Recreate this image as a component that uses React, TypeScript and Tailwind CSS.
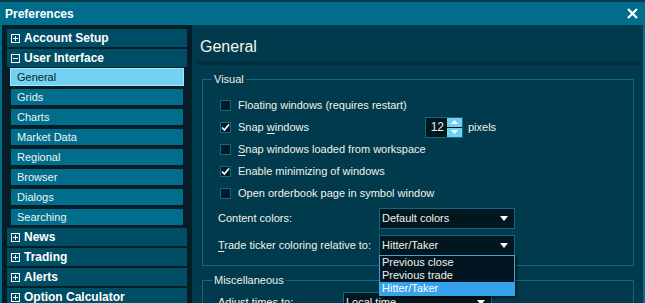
const font = "font-['Liberation_Sans',Arial,sans-serif]";

function TreeIcon({ open }: { open?: boolean }) {
  return (
    <svg width="9" height="9" viewBox="0 0 9 9" className="shrink-0">
      <rect x="0.5" y="0.5" width="8" height="8" fill="none" stroke="#ffffff" />
      <line x1="2" y1="4.5" x2="7" y2="4.5" stroke="#ffffff" />
      {!open && <line x1="4.5" y1="2" x2="4.5" y2="7" stroke="#ffffff" />}
    </svg>
  );
}

function Header({ label, open, className = "" }: { label: string; open?: boolean; className?: string }) {
  return (
    <div className={`h-[18px] bg-[#004e66] flex items-center pl-[4px] ${className}`}>
      <TreeIcon open={open} />
      <span className="ml-[4px] font-bold text-[12px] text-white leading-none">{label}</span>
    </div>
  );
}

function SubItem({ label, selected }: { label: string; selected?: boolean }) {
  return (
    <div
      className={`h-[18px] mx-[3px] mb-[2px] border flex items-center pl-[6px] leading-none ${
        selected
          ? "border-[#a6e8fb] bg-[#72d2f2] text-[#0b2430]"
          : "border-transparent bg-clip-padding bg-[#006d8c] text-[#eef4f0]"
      }`}
    >
      {label}
    </div>
  );
}

function Check({ checked, children }: { checked?: boolean; children: React.ReactNode }) {
  return (
    <div className="h-[22px] flex items-center pl-[17px]">
      <div className="w-[11px] h-[11px] border border-[#0b6a86] bg-[#001b26] flex items-center justify-center shrink-0">
        {checked && (
          <svg width="9" height="9" viewBox="0 0 9 9">
            <path d="M1 4.5 L3.4 7 L8 1.5" fill="none" stroke="#ffffff" strokeWidth="1.8" />
          </svg>
        )}
      </div>
      <span className="ml-[7px]">{children}</span>
    </div>
  );
}

function Arrow() {
  return (
    <svg width="8" height="5" viewBox="0 0 8 5">
      <path d="M0 0 H8 L4 5 Z" fill="#ffffff" />
    </svg>
  );
}

function Select({ value, width, children }: { value: string; width: string; children?: React.ReactNode }) {
  return (
    <div className={`relative h-[21px] ${width} border border-[#0b6a86] bg-[#001720] flex items-center pl-[2px] pr-[6px]`}>
      <span className="flex-1">{value}</span>
      <Arrow />
      {children}
    </div>
  );
}

export default function App() {
  const subItems = ["General", "Grids", "Charts", "Market Data", "Regional", "Browser", "Dialogs", "Searching"];

  return (
    <div className={`w-[645px] h-[303px] overflow-hidden bg-[#003a4c] text-[11px] text-[#f0f2e8] ${font}`}>
      <div className="h-[2px] bg-[#0b3a4a]" />
      <div className="h-[301px] flex flex-col border-x-2 border-[#006d8c]">
        {/* Title bar */}
        <div className="h-[23px] shrink-0 bg-[#006d8c] flex items-center justify-between pl-[3px] pr-[5px]">
          <span className="font-bold text-[12px] text-white">Preferences</span>
          <svg width="11" height="11" viewBox="0 0 11 11">
            <path d="M1 1 L10 10 M10 1 L1 10" stroke="#ffffff" strokeWidth="2.2" />
          </svg>
        </div>

        <div className="flex flex-1 min-h-0">
          {/* Tree */}
          <div className="w-[190px] shrink-0 bg-[#051d27] pt-[4px] px-[5px]">
            <Header label="Account Setup" />
            <Header label="User Interface" open className="mt-[2px] mb-[1px]" />
            {subItems.map((s) => (
              <SubItem key={s} label={s} selected={s === "General"} />
            ))}
            <Header label="News" className="mt-[2px]" />
            <Header label="Trading" className="mt-[2px]" />
            <Header label="Alerts" className="mt-[2px]" />
            <Header label="Option Calculator" className="mt-[2px]" />
          </div>

          {/* Content */}
          <div className="flex-1 bg-[#003a4c]">
            <div className="pt-[12px] pl-[8px] text-[16px] leading-[20px] text-[#f4f6ee]">General</div>
            <div className="mt-[4px] ml-[3px] mr-[2px] h-[4px] bg-[#00303e]" />

            <div className="relative mt-[14px] ml-[10px] mr-[9px] border border-[#0b6a86] pt-[14px] pb-[9px]">
              <span className="absolute left-[9px] top-[-7px] px-[2px] leading-[13px] bg-[#003a4c]">Visual</span>
              <Check>Floating windows (requires restart)</Check>
              <div className="h-[22px] flex items-center pl-[17px]">
                <div className="w-[11px] h-[11px] border border-[#0b6a86] bg-[#001b26] flex items-center justify-center shrink-0">
                  <svg width="9" height="9" viewBox="0 0 9 9">
                    <path d="M1 4.5 L3.4 7 L8 1.5" fill="none" stroke="#ffffff" strokeWidth="1.8" />
                  </svg>
                </div>
                <span className="ml-[7px] w-[187px]">
                  Snap <u className="underline-offset-2">w</u>indows
                </span>
                <div className="h-[21px] w-[38px] flex border border-[#0b6a86] bg-[#001720]">
                  <span className="flex-1 text-right pr-[3px] leading-[19px] text-[12px]">12</span>
                  <div className="w-[15px] flex flex-col gap-[1px]">
                    <div className="flex-1 bg-[#6fd0f0] flex items-center justify-center">
                      <svg width="7" height="4" viewBox="0 0 7 4">
                        <path d="M0 4 H7 L3.5 0 Z" fill="#ffffff" />
                      </svg>
                    </div>
                    <div className="flex-1 bg-[#6fd0f0] flex items-center justify-center">
                      <svg width="7" height="4" viewBox="0 0 7 4">
                        <path d="M0 0 H7 L3.5 4 Z" fill="#ffffff" />
                      </svg>
                    </div>
                  </div>
                </div>
                <span className="ml-[5px]">pixels</span>
              </div>
              <Check>
                <u className="underline-offset-2">S</u>nap windows loaded from workspace
              </Check>
              <Check checked>Enable minimizing of windows</Check>
              <Check>Open orderbook page in symbol window</Check>

              <div className="mt-[4px] flex items-center pl-[15px]">
                <span className="w-[161px]">Content colors:</span>
                <Select value="Default colors" width="w-[136px]" />
              </div>
              <div className="mt-[6px] flex items-center pl-[15px]">
                <span className="w-[161px]">
                  <u className="underline-offset-2">T</u>rade ticker coloring relative to:
                </span>
                <Select value="Hitter/Taker" width="w-[136px]">
                  <div className="absolute z-10 left-[-1px] top-[19px] w-[136px] border border-[#3fa6d6] bg-[#001520] shadow-[2px_2px_2px_rgba(0,0,0,0.5)]">
                    <div className="h-[13px] leading-[13px] pl-[2px]">Previous close</div>
                    <div className="h-[13px] leading-[13px] pl-[2px]">Previous trade</div>
                    <div className="h-[13px] leading-[13px] pl-[2px] bg-[#35a2ee] text-white">Hitter/Taker</div>
                  </div>
                </Select>
              </div>
            </div>

            <div className="relative mt-[14px] ml-[10px] mr-[9px] h-[60px] border border-[#0b6a86] pt-[11px]">
              <span className="absolute left-[9px] top-[-7px] px-[2px] leading-[13px] bg-[#003a4c]">Miscellaneous</span>
              <div className="flex items-center pl-[15px]">
                <span className="w-[125px]">Adjust times to:</span>
                <Select value="Local time" width="w-[149px]" />
              </div>
            </div>
          </div>
        </div>
      </div>
    </div>
  );
}
